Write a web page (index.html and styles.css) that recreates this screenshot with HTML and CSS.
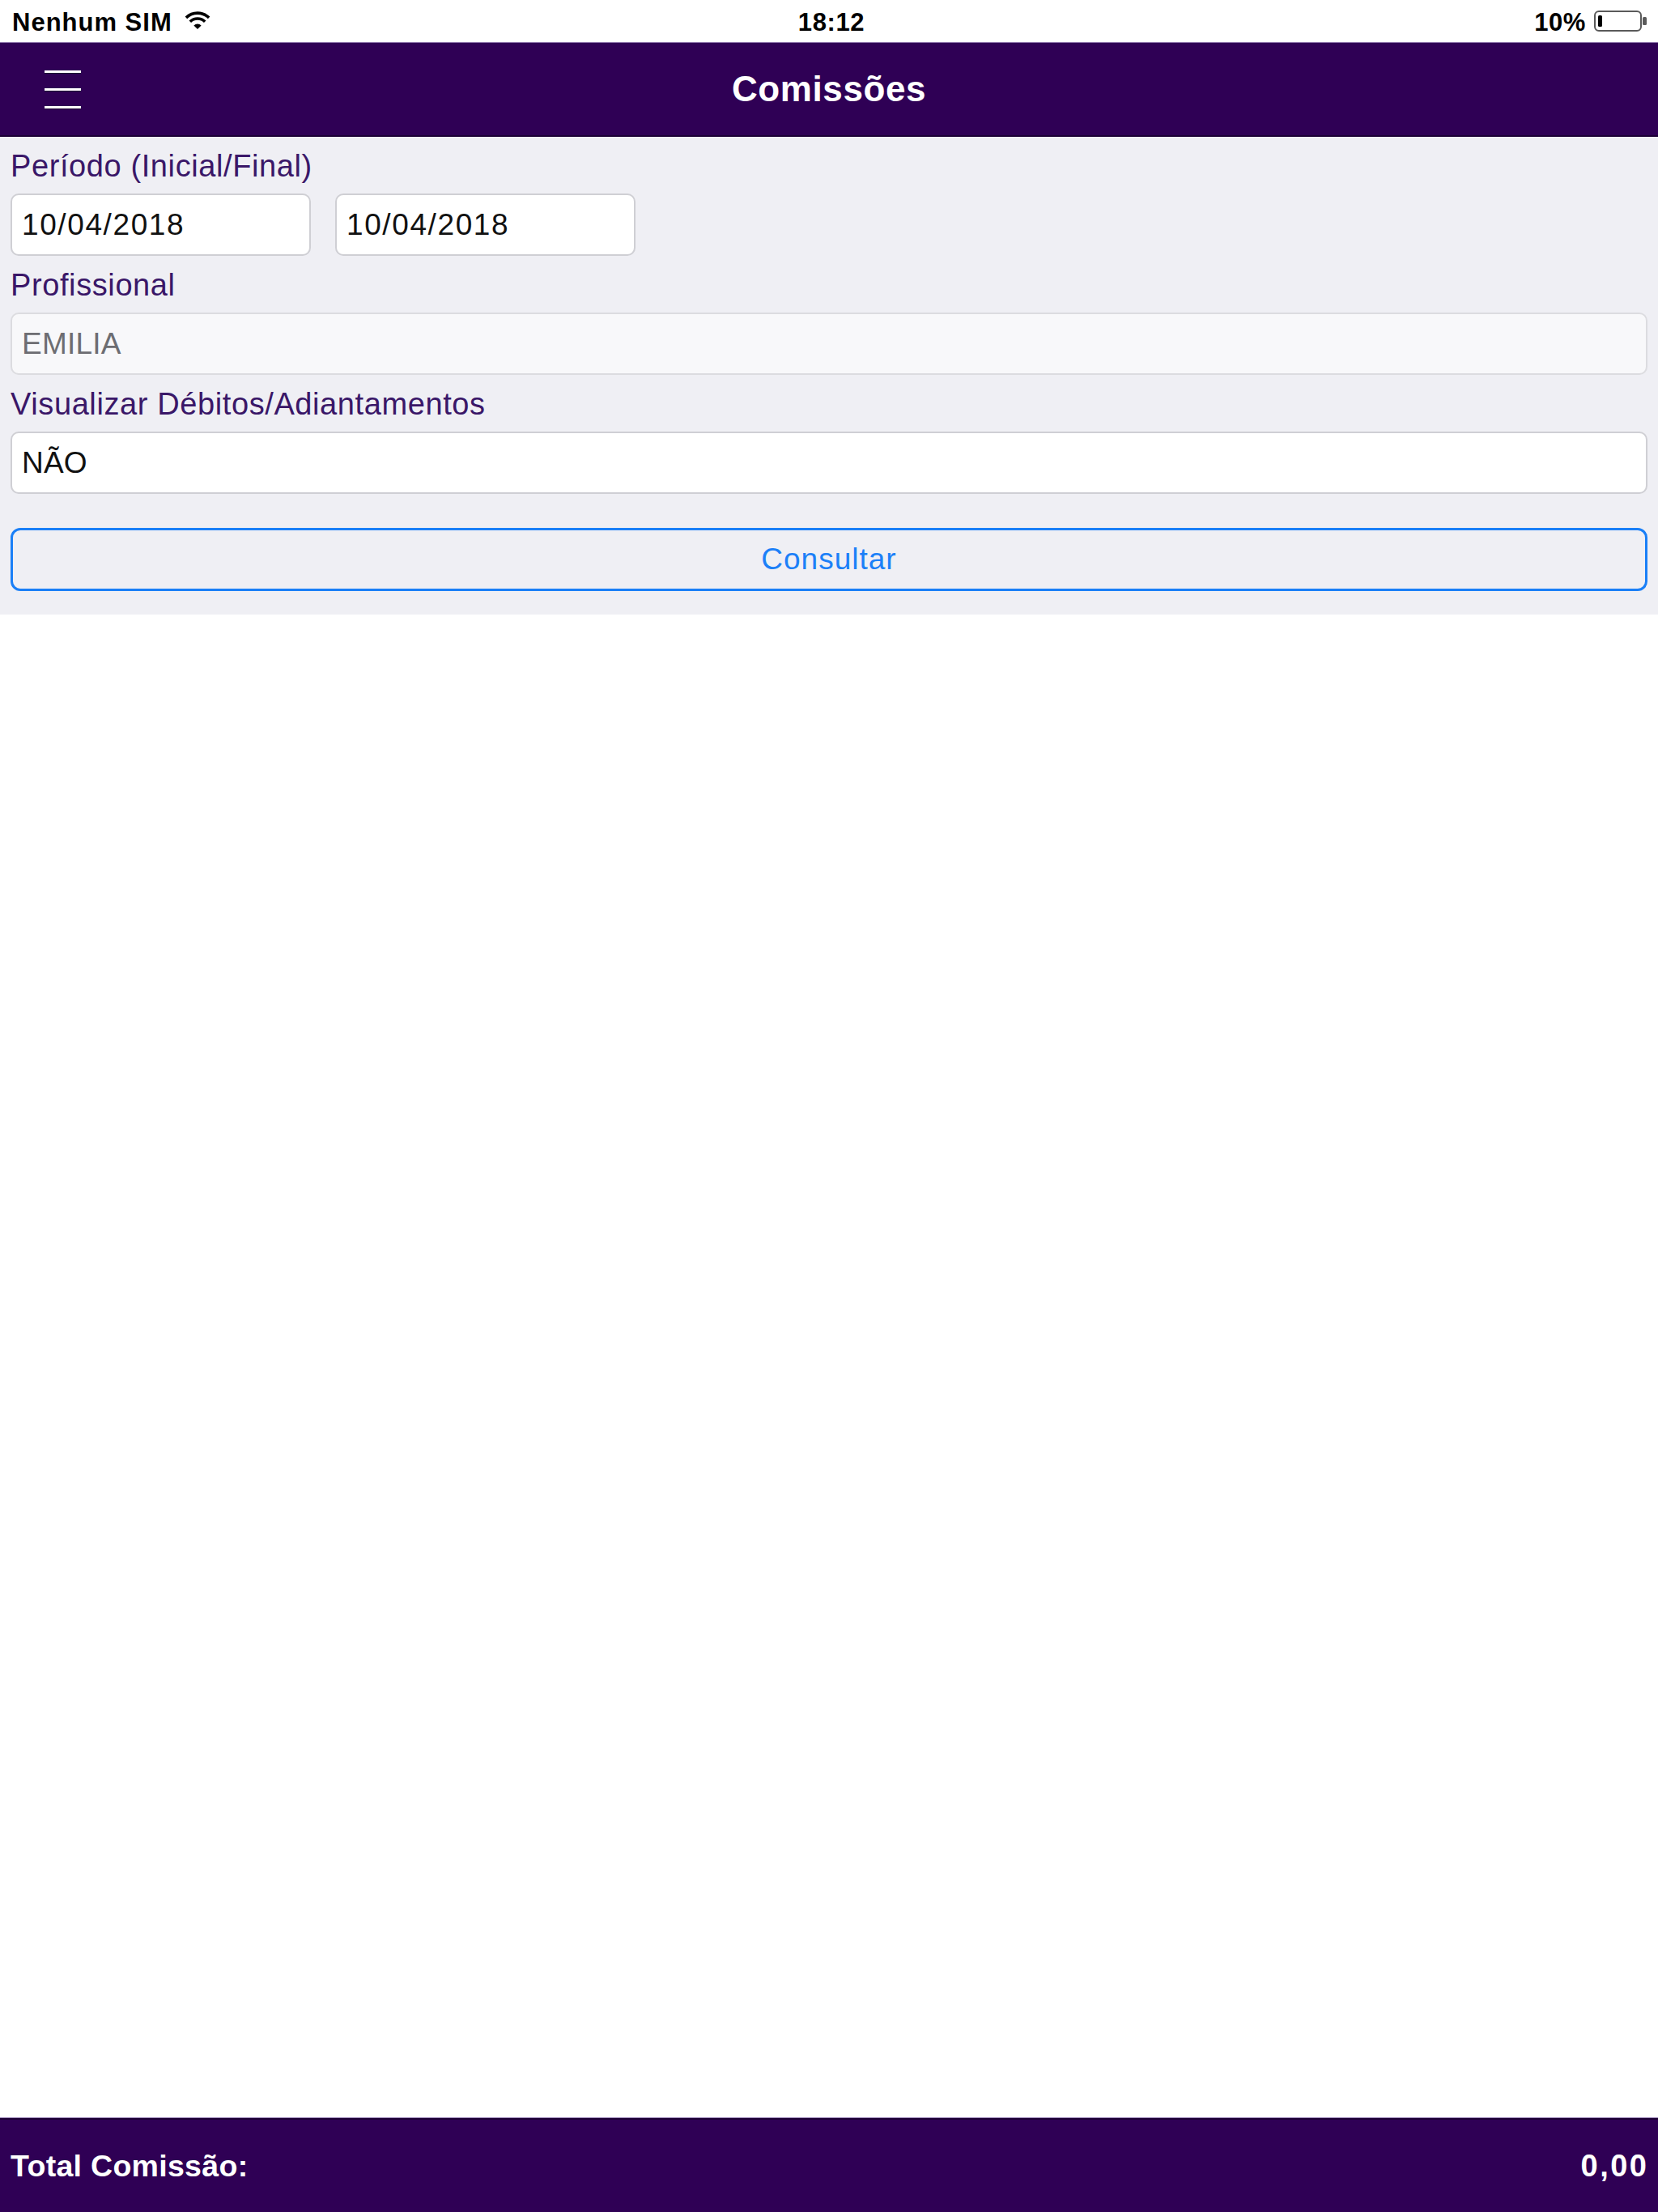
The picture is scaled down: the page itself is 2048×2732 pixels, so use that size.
FILE: index.html
```html
<!DOCTYPE html>
<html lang="pt-BR">
<head>
    <meta charset="UTF-8">
    <meta name="viewport" content="width=device-width, initial-scale=1.0">
    <title>Comissões</title>
    <link rel="stylesheet" href="styles.css">
</head>
<body>
    <div class="app">
        <div class="status-bar">
            <div class="status-left">
                <span>Nenhum SIM</span>
                <svg class="wifi" width="34" height="24" viewBox="0 0 34 24">
                    <path d="M2.9 8.9 A20 20 0 0 1 31.1 8.9" fill="none" stroke="#000" stroke-width="3.6"/>
                    <path d="M7.8 13.8 A13 13 0 0 1 26.2 13.8" fill="none" stroke="#000" stroke-width="3.6"/>
                    <path d="M17 23 L12.4 18.4 A6.5 6.5 0 0 1 21.6 18.4 Z" fill="#000"/>
                </svg>
            </div>
            <div class="status-time">18:12</div>
            <div class="status-right">
                <span>10%</span>
                <svg class="battery" width="66" height="26" viewBox="0 0 66 26">
                    <rect x="1" y="1" width="57" height="24" rx="5" fill="none" stroke="#5a5a5a" stroke-width="2"/>
                    <rect x="5" y="6" width="5" height="14" rx="1.5" fill="#000"/>
                    <rect x="60" y="8" width="5" height="10" rx="1.5" fill="#5a5a5a"/>
                </svg>
            </div>
        </div>

        <header class="top-bar">
            <div class="menu-button">
                <span></span>
                <span></span>
                <span></span>
            </div>
            <h1>Comissões</h1>
            <div></div>
        </header>

        <div class="filters">
            <label class="field-label">Período (Inicial/Final)</label>
            <div class="date-row">
                <div class="field date">10/04/2018</div>
                <div class="field date">10/04/2018</div>
            </div>

            <label class="field-label">Profissional</label>
            <div class="field disabled">EMILIA</div>

            <label class="field-label">Visualizar Débitos/Adiantamentos</label>
            <div class="field">NÃO</div>

            <button class="search-button">Consultar</button>
        </div>

        <div class="results"></div>

        <footer class="total-bar">
            <span class="total-label">Total Comissão:</span>
            <span class="total-value">0,00</span>
        </footer>
    </div>
</body>
</html>
```

FILE: styles.css
```css
body {
    margin: 0;
    font-family: 'Liberation Sans', Arial, sans-serif;
    background: #fff;
}
.app {
    height: 100vh;
    display: flex;
    flex-direction: column;
}

/* status bar */
.status-bar {
    height: 52px;
    box-sizing: border-box;
    padding: 4px 13px 0 15px;
    display: grid;
    grid-template-columns: 1fr auto 1fr;
    align-items: center;
    font-size: 31px;
    font-weight: bold;
    letter-spacing: 0.6px;
    line-height: 48px;
    color: #000;
}
.status-left {
    display: flex;
    align-items: center;
}
.status-left span {
    letter-spacing: 1px;
}
.wifi {
    margin-left: 14px;
    margin-top: -6px;
}
.status-time {
    padding-left: 4px;
}
.status-right {
    display: flex;
    align-items: center;
    justify-content: flex-end;
    gap: 10px;
}
.battery {
    margin-top: -5px;
}

/* navigation bar */
.top-bar {
    height: 117px;
    box-sizing: border-box;
    background-color: #2f0055;
    border-top: 1px solid #8a70a8;
    border-bottom: 2px solid #1c0036;
    display: grid;
    grid-template-columns: 1fr auto 1fr;
    align-items: center;
}
.top-bar h1 {
    margin: 0;
    color: #fff;
    font-size: 44px;
    font-weight: bold;
    letter-spacing: 0.6px;
}
.menu-button {
    display: flex;
    flex-direction: column;
    gap: 19px;
    padding-left: 55px;
}
.menu-button span {
    display: block;
    width: 45px;
    height: 3px;
    background: #fff;
    box-shadow: 0 1px 0 #1a0030;
}

/* filter form */
.filters {
    background-color: #efeff4;
    padding: 0 13px 29px;
    display: flex;
    flex-direction: column;
}
.field-label {
    height: 70px;
    display: flex;
    align-items: center;
    padding-top: 2px;
    box-sizing: border-box;
    color: #3a1768;
    font-size: 38px;
    letter-spacing: 0.6px;
}
.date-row {
    display: flex;
    gap: 30px;
}
.date-row .field {
    width: 371px;
}
.field {
    height: 77px;
    box-sizing: border-box;
    background: #fff;
    border: 2px solid #cfcfd4;
    border-radius: 10px;
    padding: 0 12px;
    display: flex;
    align-items: center;
    font-size: 37px;
    letter-spacing: 0.2px;
    color: #111;
}
.field.date {
    letter-spacing: 1.6px;
}
.field.disabled {
    background: #f8f8fa;
    border-color: #dcdce0;
    color: #6d6d72;
}
.search-button {
    margin-top: 42px;
    height: 78px;
    background: #efeff4;
    border: 3px solid #1a7ff7;
    border-radius: 12px;
    font-family: inherit;
    font-size: 37px;
    letter-spacing: 1px;
    color: #1c80f8;
    cursor: pointer;
}

.results {
    flex: 1;
    background: #fff;
}

/* totals footer */
.total-bar {
    height: 116px;
    box-sizing: border-box;
    background-color: #2f0055;
    border-top: 2px solid #1c0036;
    box-shadow: 0 -1px 0 #a08cbc;
    padding: 0 14px 0 13px;
    display: flex;
    align-items: center;
    justify-content: space-between;
    color: #fff;
    font-size: 37.5px;
    font-weight: bold;
}
.total-label {
    letter-spacing: 0.3px;
}
.total-value {
    font-size: 38px;
    letter-spacing: 2.5px;
    margin-right: -2.5px;
}
```
